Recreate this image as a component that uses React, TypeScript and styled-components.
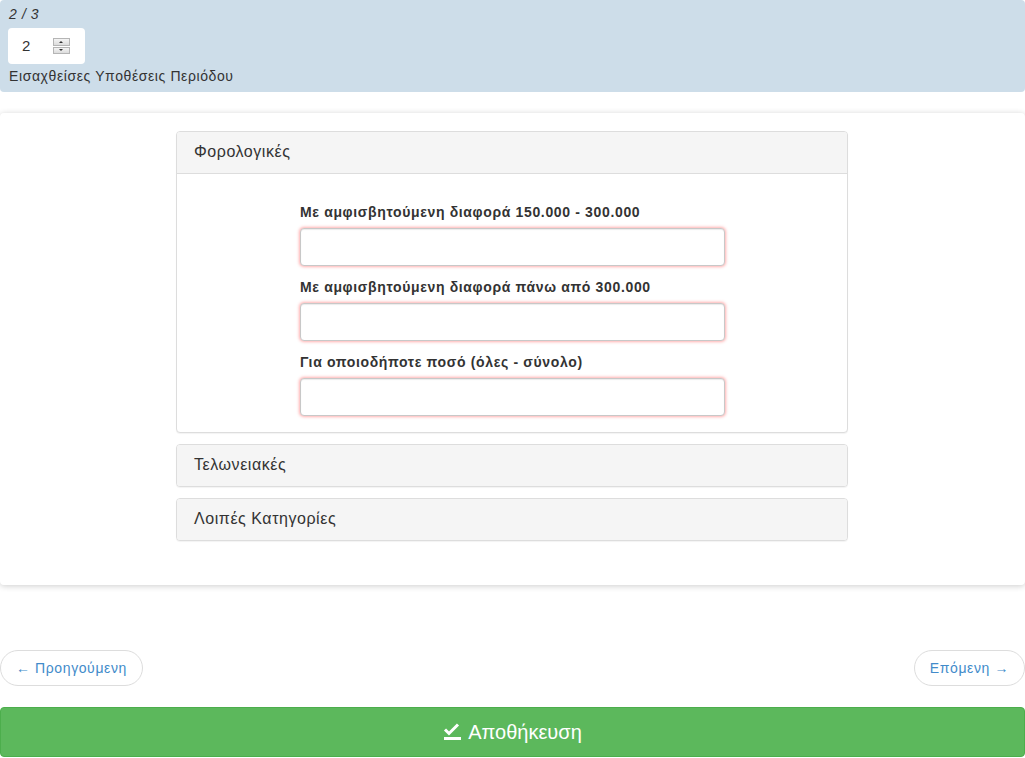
import React from 'react';
import styled, { createGlobalStyle } from 'styled-components';

const GlobalStyle = createGlobalStyle`
    html, body {
        margin: 0;
        padding: 0;
        background: #fff;
    }
    body {
        font-family: "Liberation Sans", Arial, sans-serif;
        font-size: 14px;
        line-height: 1.42857;
        letter-spacing: 0.6px;
        color: #333;
    }
    * {
        box-sizing: border-box;
    }
`;

const Page = styled.div`
    width: 1025px;
    display: flex;
    flex-direction: column;
`;

const Header = styled.div`
    background: #cddde9;
    border-radius: 4px;
    padding: 6px 8px 6px;
    height: 92px;
    display: flex;
    flex-direction: column;
    align-items: flex-start;
`;

const PageCount = styled.div`
    font-style: italic;
    line-height: 20px;
    padding-left: 1px;
    margin-top: -2px;
`;

const Stepper = styled.div`
    width: 77px;
    height: 36px;
    margin-top: 4px;
    background: #fff;
    border-radius: 4px;
    display: flex;
    align-items: center;
    padding-left: 14px;
    gap: 22px;
    font-size: 15px;
    color: #333;
`;

const Spin = styled.div`
    width: 17px;
    height: 16px;
    display: flex;
    flex-direction: column;
    gap: 1px;
`;

const SpinHalf = styled.div<{ $down?: boolean }>`
    flex: 1;
    background: linear-gradient(#f4f4f4, #dcdcdc);
    border: 1px solid #b5b5b5;
    display: flex;
    align-items: center;
    justify-content: center;
    &::after {
        content: '';
        border-left: 2px solid transparent;
        border-right: 2px solid transparent;
        ${p => (p.$down ? 'border-top: 2px solid #333;' : 'border-bottom: 2px solid #333;')}
    }
`;

const HeaderLabel = styled.div`
    margin-top: 2px;
    line-height: 20px;
    padding-left: 1px;
`;

const Card = styled.div`
    margin-top: 21px;
    background: #fff;
    border-radius: 4px;
    box-shadow: 0 1px 6px rgba(0, 0, 0, 0.2);
    padding: 18px 0 44px 176px;
    display: flex;
`;

const PanelGroup = styled.div`
    width: 672px;
    display: flex;
    flex-direction: column;
    gap: 11px;
`;

const Panel = styled.div`
    border: 1px solid #ddd;
    border-radius: 4px;
    background: #fff;
    box-shadow: 0 1px 1px rgba(0, 0, 0, 0.05);
    overflow: hidden;
`;

const PanelHeading = styled.div<{ $open?: boolean }>`
    background: #f5f5f5;
    height: ${p => (p.$open ? '42px' : '41px')};
    padding: 0 17px;
    display: flex;
    align-items: center;
    font-size: 16px;
    letter-spacing: 0.55px;
    color: #333;
    ${p => (p.$open ? 'border-bottom: 1px solid #ddd;' : '')}
`;

const PanelBody = styled.div`
    padding: 28px 0 16px 123px;
    display: flex;
    flex-direction: column;
`;

const Field = styled.div`
    width: 425px;
    display: flex;
    flex-direction: column;
    margin-bottom: 11px;
    &:last-child {
        margin-bottom: 0;
    }
`;

const Label = styled.label`
    font-weight: bold;
    line-height: 20px;
    margin-bottom: 6px;
    letter-spacing: 0.65px;
`;

const Input = styled.input`
    height: 38px;
    width: 100%;
    border: 1px solid #c8c8c8;
    border-radius: 4px;
    box-shadow: 0 0 3px 1px rgba(255, 80, 80, 0.45), inset 0 1px 1px rgba(0, 0, 0, 0.08);
    padding: 6px 12px;
    font: inherit;
    outline: none;
`;

const NavRow = styled.div`
    margin-top: 65px;
    display: flex;
    justify-content: space-between;
`;

const NavButton = styled.button`
    height: 36px;
    padding: 0 15px;
    border: 1px solid #ddd;
    border-radius: 18px;
    background: #fff;
    color: #428bca;
    font-family: "Liberation Sans", Arial, sans-serif;
    font-size: 14px;
    letter-spacing: 0.6px;
    cursor: pointer;
`;

const SaveButton = styled.button`
    margin-top: 21px;
    height: 50px;
    width: 100%;
    background: #5cb85c;
    border: 1px solid #4cae4c;
    border-radius: 4px;
    color: #fff;
    font-family: "Liberation Sans", Arial, sans-serif;
    font-size: 20px;
    display: flex;
    align-items: center;
    justify-content: center;
    gap: 6px;
    cursor: pointer;
`;

function CheckIcon() {
    return (
        <svg width="19" height="18" viewBox="0 0 19 18">
            <path d="M2 6.5 L6 10.5 L15 1.5" fill="none" stroke="#fff" strokeWidth="3" />
            <rect x="1" y="14" width="17" height="3" fill="#fff" />
        </svg>
    );
}

const fields = [
    'Με αμφισβητούμενη διαφορά 150.000 - 300.000',
    'Με αμφισβητούμενη διαφορά πάνω από 300.000',
    'Για οποιοδήποτε ποσό (όλες - σύνολο)',
];

export default function App() {
    return (
        <Page>
            <GlobalStyle />
            <Header>
                <PageCount>2 / 3</PageCount>
                <Stepper>
                    <span>2</span>
                    <Spin>
                        <SpinHalf />
                        <SpinHalf $down />
                    </Spin>
                </Stepper>
                <HeaderLabel>Εισαχθείσες Υποθέσεις Περιόδου</HeaderLabel>
            </Header>

            <Card>
                <PanelGroup>
                    <Panel>
                        <PanelHeading $open>Φορολογικές</PanelHeading>
                        <PanelBody>
                            {fields.map(f => (
                                <Field key={f}>
                                    <Label>{f}</Label>
                                    <Input type="text" />
                                </Field>
                            ))}
                        </PanelBody>
                    </Panel>
                    <Panel>
                        <PanelHeading>Τελωνειακές</PanelHeading>
                    </Panel>
                    <Panel>
                        <PanelHeading>Λοιπές Κατηγορίες</PanelHeading>
                    </Panel>
                </PanelGroup>
            </Card>

            <NavRow>
                <NavButton>← Προηγούμενη</NavButton>
                <NavButton>Επόμενη →</NavButton>
            </NavRow>

            <SaveButton>
                <CheckIcon />
                Αποθήκευση
            </SaveButton>
        </Page>
    );
}
